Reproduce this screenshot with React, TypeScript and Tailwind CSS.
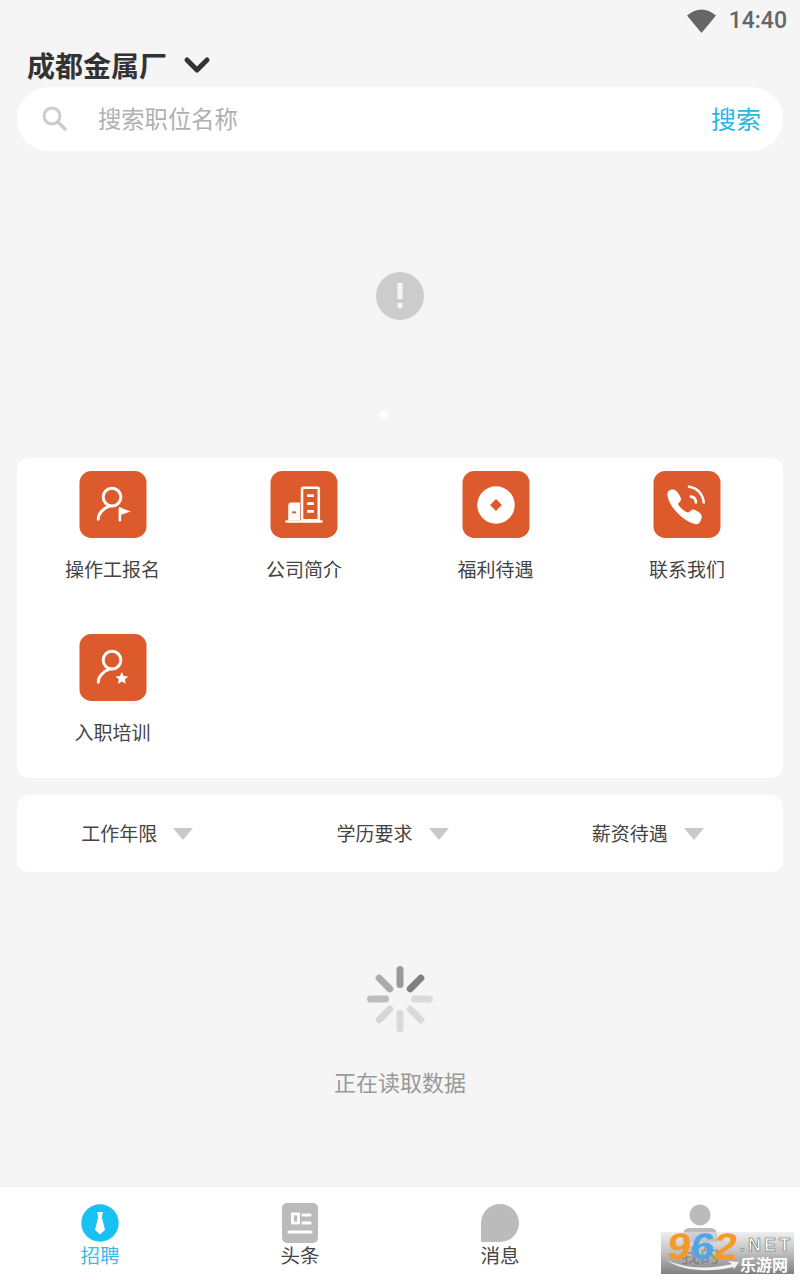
import { ChevronDown } from "lucide-react";
import type { ReactNode } from "react";

const SPOKES = [
  { angle: 0, color: "#9a9a9a" },
  { angle: 45, color: "#808080" },
  { angle: 90, color: "#dadada" },
  { angle: 135, color: "#dadada" },
  { angle: 180, color: "#dadada" },
  { angle: 225, color: "#d6d6d6" },
  { angle: 270, color: "#bdbdbd" },
  { angle: 315, color: "#ababab" },
];

function PersonBase() {
  return (
    <>
      <circle cx="33" cy="26.500" r="9" fill="none" stroke="#fff" strokeWidth="3" />
      <path d="M19 49c0-6 5-11 11-13" fill="none" stroke="#fff" strokeWidth="3" strokeLinecap="round" />
    </>
  );
}

function Tile({ children }: { children: ReactNode }) {
  return (
    <svg width="68" height="68" viewBox="0 0 68 68" className="block">
      <rect width="68" height="68" rx="12" fill="#dc5a2b" />
      {children}
    </svg>
  );
}

const MENU: Array<{ label: string; icon: ReactNode }> = [
  {
    label: "操作工报名",
    icon: (
      <>
        <PersonBase />
        <path d="M41 38v12" stroke="#fff" strokeWidth="2.600" strokeLinecap="round" />
        <path d="M41 37l11 4-11 4z" fill="#fff" />
      </>
    ),
  },
  {
    label: "公司简介",
    icon: (
      <>
        <rect x="15" y="50" width="38" height="2.400" rx="1" fill="#fff" />
        <rect x="32" y="17" width="17" height="33" rx="1.500" fill="none" stroke="#fff" strokeWidth="2.600" />
        <path d="M37 25h7M37 33h7M37 41h7" stroke="#fff" strokeWidth="2.800" />
        <path d="M18 50V35a3 3 0 0 1 3-3h9v18z" fill="#fff" />
        <path d="M22 42h4" stroke="#dc5a2b" strokeWidth="2" />
      </>
    ),
  },
  {
    label: "福利待遇",
    icon: (
      <>
        <circle cx="34" cy="34.500" r="19" fill="#fff" />
        <path d="M34 28.500l6 6-6 6-6-6z" fill="#dc5a2b" />
      </>
    ),
  },
  {
    label: "联系我们",
    icon: (
      <>
        <path
          d="M14 24C14 20 18 18 21 19C24 20 28 26 28 29C28 31 25 32 25 34C27 37 32 42 35 42C37 42 38 39 40 39C43 39 49 43 49 46C49 50 46 55 43 54C32 52 16 38 14 24Z"
          fill="#fff"
        />
        <path d="M36 16c8 1 14 7 15 16" fill="none" stroke="#fff" strokeWidth="2.600" strokeLinecap="round" />
        <path d="M38 26c3 .5 5 3 5 6" fill="none" stroke="#fff" strokeWidth="2.600" strokeLinecap="round" />
      </>
    ),
  },
  {
    label: "入职培训",
    icon: (
      <>
        <PersonBase />
        <path d="M43 38.500l1.900 4.100 4.500.5-3.300 3 .9 4.400-4-2.200-4 2.200.9-4.400-3.300-3 4.500-.5z" fill="#fff" />
      </>
    ),
  },
];

const FILTERS = ["工作年限", "学历要求", "薪资待遇"];

function MenuCard() {
  return (
    <div className="mx-[17px] grid grid-cols-4 gap-y-[51px] rounded-xl bg-white pt-[13px] pb-8">
      {MENU.map((item) => (
        <div key={item.label} className="flex h-[112px] flex-col items-center pr-[0.500px]">
          <Tile>{item.icon}</Tile>
          <span className="mt-[17px] text-[19px] leading-[28px] text-[#444]">{item.label}</span>
        </div>
      ))}
    </div>
  );
}

function FilterBar() {
  return (
    <div className="mx-[17px] mt-[17px] grid h-[77px] grid-cols-3 rounded-xl bg-white">
      {FILTERS.map((label) => (
        <div key={label} className="flex items-center justify-center gap-4 pr-[15px]">
          <span className="text-[19px] text-[#444]">{label}</span>
          <span className="h-0 w-0 border-x-[10.500px] border-t-[12px] border-x-transparent border-t-[#c9c9c9]" />
        </div>
      ))}
    </div>
  );
}

function Spinner() {
  return (
    <svg width="70" height="70" viewBox="-35 -35 70 70" className="block">
      {SPOKES.map((spoke) => (
        <rect
          key={spoke.angle}
          x="-3.500"
          y="-33"
          width="7"
          height="22"
          rx="3.500"
          fill={spoke.color}
          transform={`rotate(${spoke.angle})`}
        />
      ))}
    </svg>
  );
}

function Tab({ label, active, children }: { label: string; active?: boolean; children: ReactNode }) {
  return (
    <div className="flex flex-col items-center pt-[17px]">
      <div className="flex h-[38px] items-center justify-center">{children}</div>
      <span className={`text-[19.500px] leading-[26px] ${active ? "text-[#3fb8e6]" : "text-[#444]"}`}>{label}</span>
    </div>
  );
}

function TabBar() {
  return (
    <div className="relative grid h-[94px] grid-cols-4 border-t border-[#eeeeee] bg-white">
      <Tab label="招聘" active>
        <svg width="38" height="38" viewBox="0 0 38 38">
          <circle cx="19" cy="19" r="18.700" fill="#19c0f3" />
          <path d="M16 8h6l-1.200 5 3.200 13-5 4.500-5-4.500 3.200-13z" fill="#fff" />
        </svg>
      </Tab>
      <Tab label="头条">
        <svg width="36" height="40" viewBox="0 0 36 40">
          <rect width="36" height="40" rx="5" fill="#bbbbbb" />
          <rect x="10.500" y="11" width="6" height="9" fill="none" stroke="#fff" strokeWidth="2.800" />
          <path d="M21 12h7M21 20h7M7 29h22" stroke="#fff" strokeWidth="3.200" strokeLinecap="round" />
        </svg>
      </Tab>
      <Tab label="消息">
        <div className="h-[38px] w-[38px] rounded-full rounded-bl-none bg-[#bbbbbb]" />
      </Tab>
      <Tab label="我的">
        <svg width="36" height="38" viewBox="0 0 36 38">
          <circle cx="18" cy="11" r="10.500" fill="#bbbbbb" />
          <path d="M1 38V30a6 6 0 0 1 6-6h22a6 6 0 0 1 6 6v8z" fill="#bbbbbb" />
        </svg>
      </Tab>
      <Watermark />
    </div>
  );
}

// 962.net stamp sitting over the bottom right corner
function Watermark() {
  return (
    <div className="absolute top-[45px] left-[661px] h-[42px] w-[133px] bg-gradient-to-b from-[#e4e4e4]/60 via-[#aaaaaa]/75 to-[#727272]/90">
      <svg width="76" height="14" viewBox="0 0 76 14" className="absolute top-[26px] left-[4px]">
        <path d="M1 1c14 9 42 11 66 5l-4-3 11 1-5 7-1-2C44 15 14 13 1 1z" fill="#f2f2f2" />
      </svg>
      <span className="absolute top-[1px] left-[7px] origin-left scale-x-[1.130] -skew-x-6 text-[37px] leading-[28px] font-bold text-[#f39a27] [font-family:'Liberation_Sans',sans-serif]">
        9<span className="text-[#4ea6e6]">6</span>2
      </span>
      <span className="absolute top-[5px] left-[79px] text-[18px] leading-[16px] font-bold tracking-[3px] text-white [font-family:'Liberation_Sans',sans-serif] [-webkit-text-stroke:0.600px_#666]">
        .NET
      </span>
      <span className="absolute top-[24px] left-[79px] text-[16px] leading-[16px] font-bold text-white">
        乐游网
      </span>
    </div>
  );
}

export default function App() {
  return (
    <div className="flex h-[1280px] w-[800px] flex-col overflow-hidden bg-[#f5f5f5] [font-family:'Noto_Sans_CJK_SC',sans-serif]">
      <div className="flex h-[42px] items-center justify-end gap-[13px] pr-[13px]">
        <svg width="29" height="24" viewBox="0 0 29 24">
          <path d="M0 6.500Q14.500-5.500 29 6.500L14.500 24z" fill="#666" />
        </svg>
        <span className="mt-[1px] text-[23px] font-medium text-[#666] [font-family:Roboto,sans-serif]">14:40</span>
      </div>

      <div className="flex h-[45px] items-center gap-[10px] pl-[27px]">
        <span className="text-[28px] leading-[40px] font-bold text-[#333]">成都金属厂</span>
        <ChevronDown size={40} strokeWidth={3} className="text-[#333]" />
      </div>

      <div className="mx-[17px] flex h-16 items-center rounded-[32px] bg-white pr-[22px] pl-6">
        <svg width="28" height="28" viewBox="0 0 28 28">
          <circle cx="11" cy="11" r="8" fill="none" stroke="#cccccc" strokeWidth="3" />
          <path d="M17 17l8 8" stroke="#cccccc" strokeWidth="3.200" />
        </svg>
        <span className="mb-[2px] ml-[29px] flex-1 text-[23.300px] leading-[34px] text-[#b0b0b0]">搜索职位名称</span>
        <span className="mb-[3px] text-[25px] leading-[34px] text-[#2bb6e3]">搜索</span>
      </div>

      <div className="relative flex h-[307px] items-center justify-center pb-[17px]">
        <div className="flex h-12 w-12 items-center justify-center rounded-full bg-[#cccccc]">
          <svg width="8" height="28" viewBox="0 0 8 28">
            <path d="M1.500 1h5v16h-5zM1.500 21h5v5h-5z" fill="#f5f5f5" />
          </svg>
        </div>
        <span className="absolute top-[259px] left-[379px] h-[9px] w-[9px] rounded-full bg-white" />
      </div>

      <MenuCard />
      <FilterBar />

      <div className="flex flex-1 flex-col items-center pt-[92px]">
        <Spinner />
        <span className="mt-[30px] text-[22px] leading-[34px] text-[#999]">正在读取数据</span>
      </div>

      <TabBar />
    </div>
  );
}
